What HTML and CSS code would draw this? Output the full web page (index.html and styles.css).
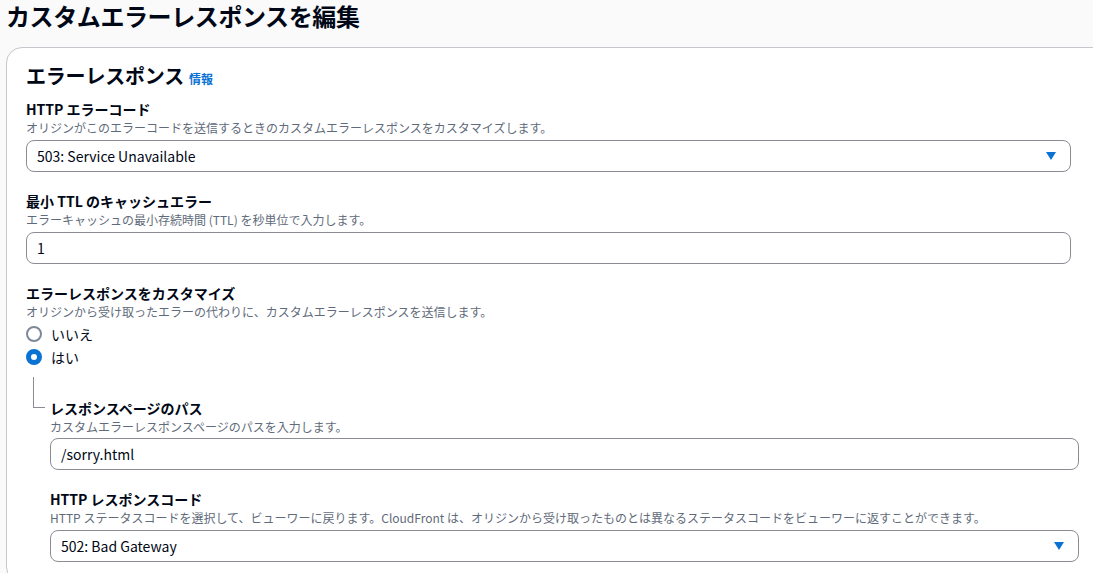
FILE: index.html
```html
<!DOCTYPE html>
<html lang="ja">
<head>
<meta charset="utf-8">
<link rel="stylesheet" href="styles.css">
</head>
<body>
<div class="page">
  <h1 class="title">カスタムエラーレスポンスを編集</h1>
  <div class="card">
    <h2 class="card-head">エラーレスポンス<span class="info">情報</span></h2>

    <div class="field wide">
      <div class="label">HTTP エラーコード</div>
      <div class="desc">オリジンがこのエラーコードを送信するときのカスタムエラーレスポンスをカスタマイズします。</div>
      <div class="control select"><span>503: Service Unavailable</span><span class="caret"></span></div>
    </div>

    <div class="field wide">
      <div class="label">最小 TTL のキャッシュエラー</div>
      <div class="desc">エラーキャッシュの最小存続時間 (TTL) を秒単位で入力します。</div>
      <div class="control"><span>1</span></div>
    </div>

    <div class="field">
      <div class="label">エラーレスポンスをカスタマイズ</div>
      <div class="desc">オリジンから受け取ったエラーの代わりに、カスタムエラーレスポンスを送信します。</div>
      <div class="radios">
        <div class="radio"><span class="dot"></span><span>いいえ</span></div>
        <div class="radio"><span class="dot on"></span><span>はい</span></div>
      </div>
    </div>

    <div class="nested">
      <div class="field first">
        <div class="label">レスポンスページのパス</div>
        <div class="desc">カスタムエラーレスポンスページのパスを入力します。</div>
        <div class="control"><span>/sorry.html</span></div>
      </div>
      <div class="field">
        <div class="label">HTTP レスポンスコード</div>
        <div class="desc">HTTP ステータスコードを選択して、ビューワーに戻ります。CloudFront は、オリジンから受け取ったものとは異なるステータスコードをビューワーに返すことができます。</div>
        <div class="control select"><span>502: Bad Gateway</span><span class="caret"></span></div>
      </div>
    </div>
  </div>
</div>
</body>
</html>
```

FILE: styles.css
```css
html, body {
  margin: 0;
  padding: 0;
  background: #fafafa;
  overflow: hidden;
}
body {
  font-family: "Noto Sans CJK JP", "Noto Sans", sans-serif;
  color: #000716;
}
.page {
  padding: 0 0 0 6px;
  width: 1200px;
}
.title {
  margin: 0;
  font-size: 24px;
  line-height: 32px;
  font-weight: 700;
  letter-spacing: -0.4px;
}
.card {
  margin-top: 15px;
  width: 1100px;
  background: #ffffff;
  border: 1px solid #c6c6cd;
  border-radius: 16px;
  padding: 14px 20px 20px 19px;
}
.card-head {
  margin: 0;
  font-size: 20px;
  line-height: 28px;
  font-weight: 700;
  letter-spacing: -0.2px;
}
.info {
  font-size: 12px;
  color: #0972d3;
  font-weight: 700;
  margin-left: 5px;
  letter-spacing: 0;
}
.field {
  margin-top: 18px;
  width: 1045px;
}
.card-head + .field {
  margin-top: 5px;
}
.label {
  font-size: 14px;
  line-height: 22px;
  font-weight: 700;
}
.desc {
  font-size: 12px;
  line-height: 16px;
  color: #5f6b7a;
}
.control {
  margin-top: 4px;
  box-sizing: border-box;
  height: 32px;
  border: 1px solid #8c8c94;
  border-radius: 8px;
  display: flex;
  align-items: center;
  justify-content: space-between;
  padding: 0 14px 0 10px;
  font-size: 14px;
  background: #fff;
}
.caret {
  width: 0;
  height: 0;
  border-left: 5.5px solid transparent;
  border-right: 5.5px solid transparent;
  border-top: 8px solid #0972d3;
}
.radios {
  margin-top: 3px;
  display: flex;
  flex-direction: column;
  gap: 1px;
}
.radio {
  display: flex;
  align-items: center;
  font-size: 14px;
  line-height: 22px;
}
.dot {
  box-sizing: border-box;
  width: 16px;
  height: 16px;
  border-radius: 50%;
  border: 2px solid #7d8998;
  margin-right: 9px;
  background: #fff;
}
.dot.on {
  border: 5px solid #0972d3;
}
.nested {
  position: relative;
  margin-left: 24px;
  margin-top: 29px;
}
.nested::before {
  content: "";
  position: absolute;
  left: -17px;
  top: -20px;
  width: 11px;
  height: 30px;
  border-left: 1px solid #8c8c94;
  border-bottom: 1px solid #8c8c94;
}
.nested .field {
  width: 1029px;
}
.nested .field.first {
  margin-top: 0;
}
.nested .field.first .control {
  margin-top: 3px;
}
```
